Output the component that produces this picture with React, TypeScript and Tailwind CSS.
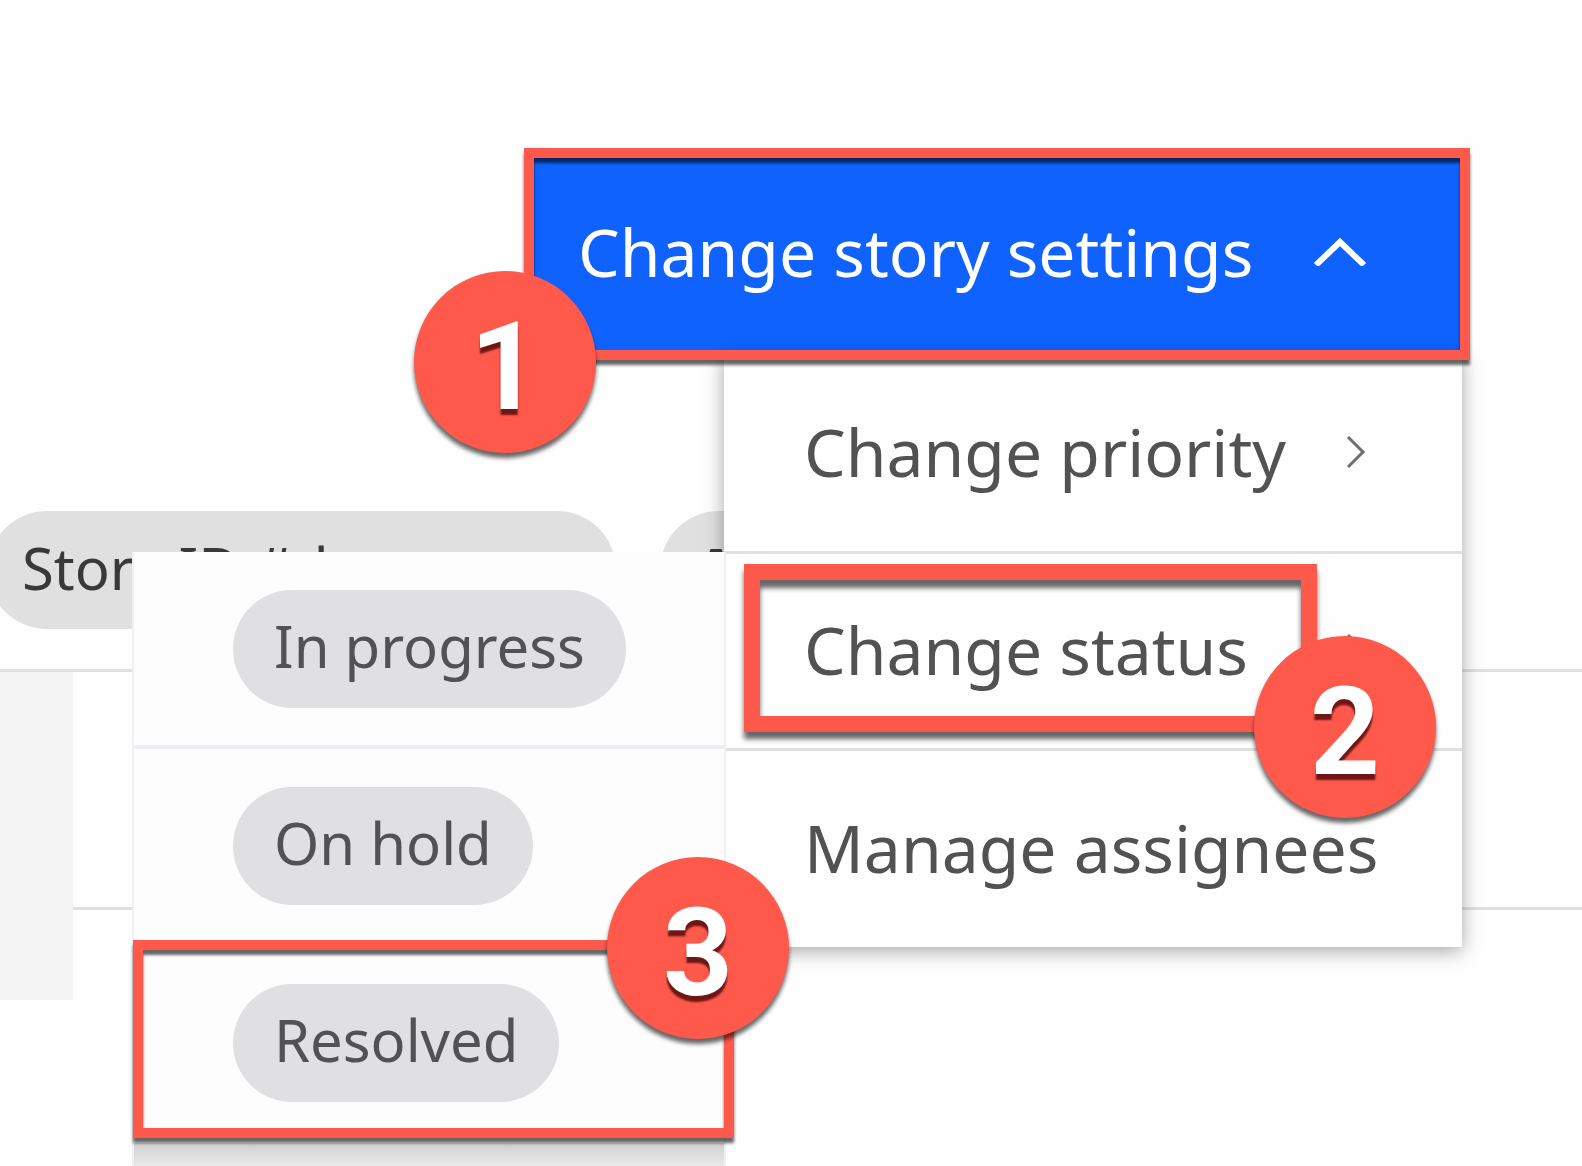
import React from 'react';

function Badge({ n, className }: { n: number; className: string }) {
  return (
    <span
      className={`absolute z-30 flex size-[182px] items-center justify-center rounded-full pt-3 font-['Roboto',sans-serif] text-[122px] leading-none font-bold text-white bg-[#ff594c] shadow-[0_5px_4px_rgba(0,0,0,0.6)] [text-shadow:0_6px_2px_rgba(60,0,0,0.75)] ${className}`}
    >
      {n}
    </span>
  );
}

const frame = 'pointer-events-none absolute z-20 border-[#ff594c]';
const thinFrame = `${frame} border-10 shadow-[0_5px_3px_rgba(0,0,0,0.6),inset_0_5px_3px_rgba(0,0,0,0.6)]`;
const thickFrame = `${frame} border-16 shadow-[0_7px_5px_rgba(0,0,0,0.6),inset_0_8px_5px_rgba(0,0,0,0.6)]`;

function MenuItem({ label, arrow }: { label: string; arrow?: boolean }) {
  return (
    <button
      type="button"
      className="flex h-full w-full items-center justify-between pr-24 pb-1 pl-20 text-left text-[66px] leading-none whitespace-nowrap text-[#525252]"
    >
      {label}
      {arrow && (
        <svg viewBox="0 0 20 34" className="h-[34px] w-5 shrink-0" fill="none" stroke="#6f6f6f" strokeWidth="3">
          <path d="M2 3 17 18 2 33" />
        </svg>
      )}
    </button>
  );
}

function StatusOption({ label, last }: { label: string; last?: boolean }) {
  return (
    <li className={`flex h-[197px] items-center border-[#efedf1] pl-[99px] ${last ? 'pb-1' : 'border-b-4'}`}>
      <button
        type="button"
        className="h-[118px] rounded-full bg-[#e0dfe1] px-[41px] pb-1.5 text-[58px] leading-none whitespace-nowrap text-[#525154]"
      >
        {label}
      </button>
    </li>
  );
}

export default function App() {
  return (
    <div className="relative min-h-screen overflow-hidden bg-[#fefefe] font-['Noto_Sans',sans-serif]">
      <header className="flex justify-end pt-[148px] pr-28">
        <div className="relative z-10 w-[946px]">
          <button
            type="button"
            aria-expanded="true"
            className="flex h-[212px] w-full items-center justify-between bg-[#0f62fe] pr-[104px] pb-1.5 pl-[54px] text-[66px] leading-none whitespace-nowrap text-white"
          >
            Change story settings
            <svg viewBox="0 0 52 30" className="h-[30px] w-[52px] shrink-0" fill="none" stroke="#fff" strokeWidth="6">
              <path d="M2 29 26 6 50 29" />
            </svg>
          </button>
          <span className={`${thinFrame} inset-0`} />
          <Badge n={1} className="top-[123px] left-[-110px]" />

          <ul className="absolute top-[206px] right-2 w-[738px] bg-[#fefefe] shadow-[0_4px_18px_rgba(0,0,0,0.35)]">
            <li className="h-[200px] border-b-3 border-[#e0e0e0]">
              <MenuItem label="Change priority" arrow />
            </li>
            <li className="relative h-[197px] border-b-3 border-[#e0e0e0]">
              <MenuItem label="Change status" arrow />
              <span className={`${thickFrame} top-[10px] left-5 h-[168px] w-[573px]`} />
              <Badge n={2} className="top-[82px] right-[26px]" />
              <ul className="absolute top-[-2px] right-[736px] w-[594px] border-x-2 border-[#f1eff2] bg-[#fdfdfd]">
                <StatusOption label="In progress" />
                <StatusOption label="On hold" />
                <StatusOption label="Resolved" last />
                <li className="h-6 bg-linear-to-b from-[#d0d0d0] to-[#ebebeb]" />
                <li aria-hidden="true" className={`${thinFrame} top-[388px] left-[-1px] h-[198px] w-[601px]`} />
                <li aria-hidden="true">
                  <Badge n={3} className="top-[305px] right-[-65px]" />
                </li>
              </ul>
            </li>
            <li className="h-[196px]">
              <MenuItem label="Manage assignees" />
            </li>
          </ul>
        </div>
      </header>

      <main className="pt-[151px]">
        <div className="-ml-3 flex gap-11 text-[58px] leading-none whitespace-nowrap text-[#393939]">
          <span className="flex h-[118px] w-[628px] shrink-0 items-center rounded-full bg-[#e0e0e0] pb-1 pl-[34px]">
            Story ID #d
          </span>
          <span className="flex h-[118px] w-[300px] shrink-0 items-center rounded-full bg-[#e0e0e0] pb-1 pl-9 font-bold">
            A
          </span>
        </div>
        <div className="mt-10 border-t-3 border-[#e0e0e0]">
          <div className="flex">
            <div className="h-[328px] w-[73px] bg-[#f3f3f3]" />
            <div className="h-[238px] grow border-b-3 border-[#e0e0e0]" />
          </div>
        </div>
      </main>
    </div>
  );
}
